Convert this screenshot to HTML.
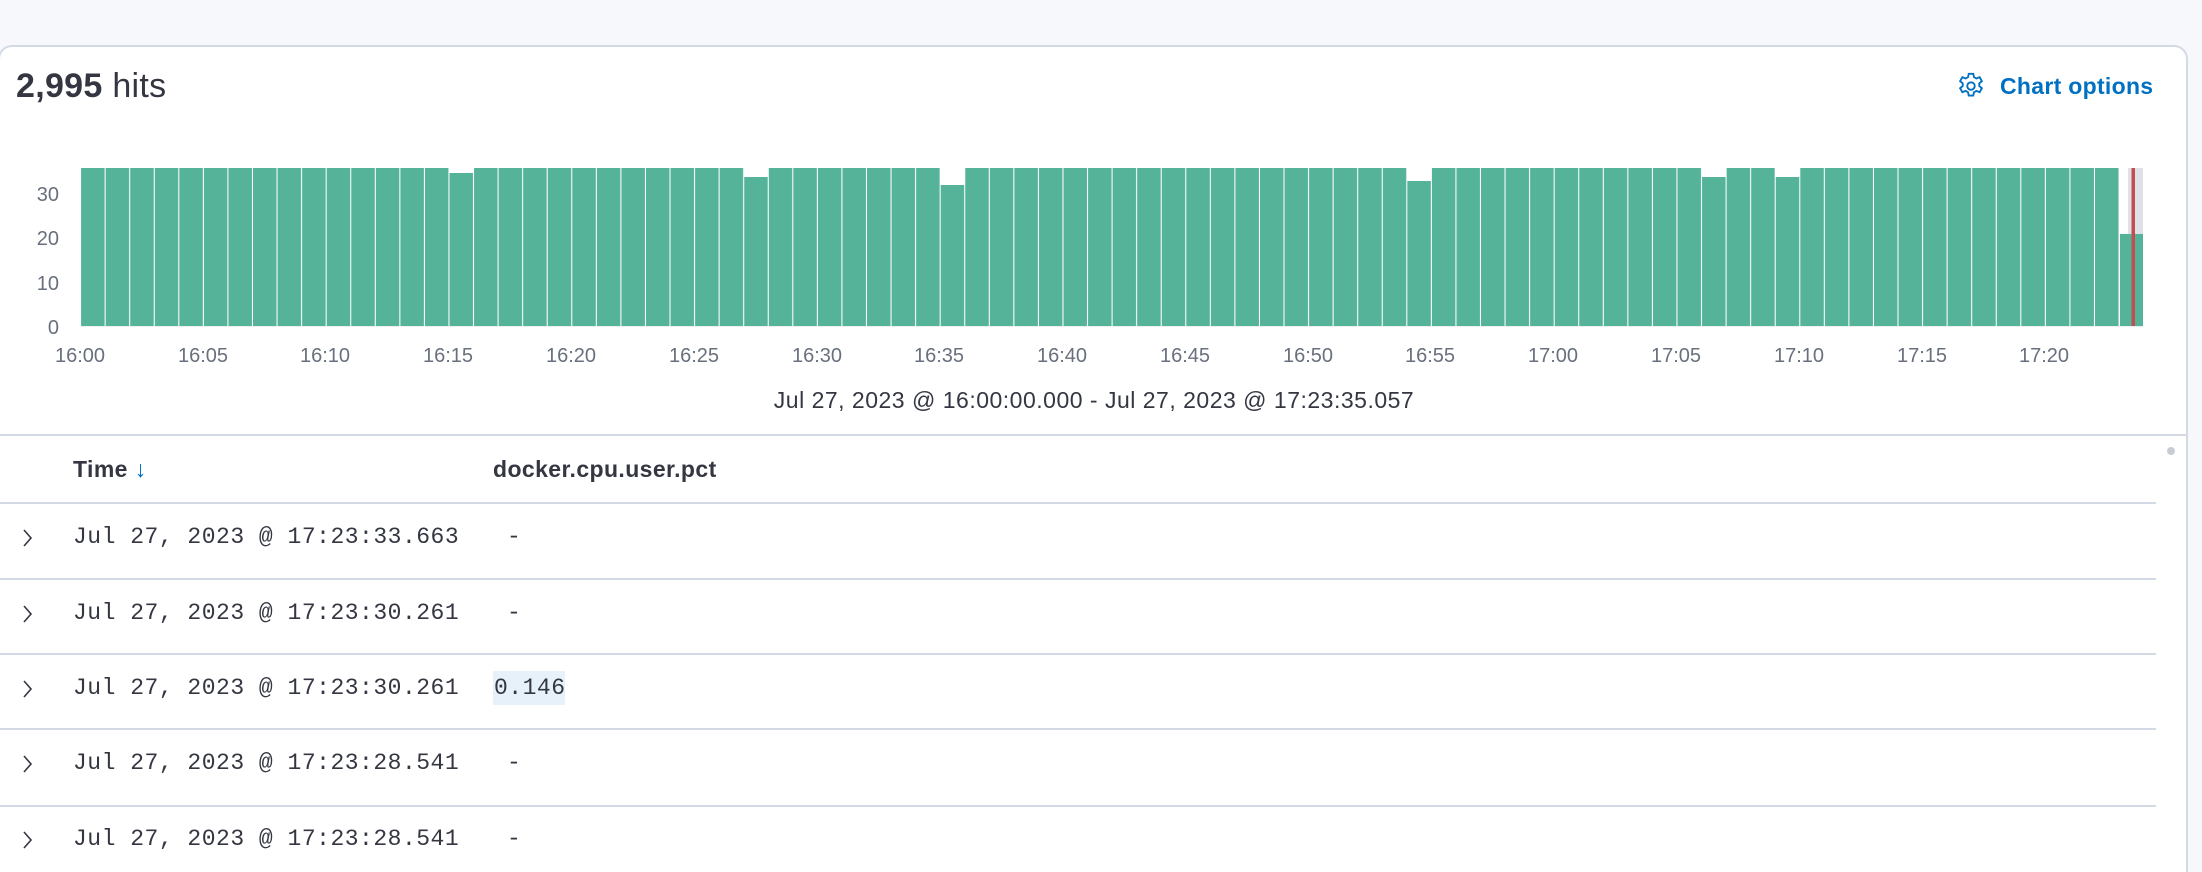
<!DOCTYPE html>
<html><head><meta charset="utf-8"><style>
*{margin:0;padding:0;box-sizing:border-box}
html,body{width:2202px;height:872px;overflow:hidden}
body{background:#f7f8fc;font-family:"Liberation Sans",sans-serif;position:relative;color:#343741}
.card{position:absolute;left:-2px;top:45px;width:2190px;height:827px;background:#fff;border:2px solid #d3dae6;border-bottom:none;border-radius:14px 14px 0 0}
.abs{position:absolute;white-space:nowrap}
.hl{border-top:2px solid #d3dae6;position:absolute;left:0}
.mono{font-family:"Liberation Mono",monospace;font-size:23px;letter-spacing:0.5px;color:#343741}
</style></head><body>
<div class="card"></div>
<div class="abs" style="left:16px;top:66px;font-size:34px;line-height:40px;letter-spacing:0.3px"><b>2,995</b> hits</div>
<svg class="abs" style="left:1956px;top:71px" width="30" height="30" viewBox="0 0 16 16"><path fill="none" stroke="#0071c2" stroke-width="1" d="M6.8 1.5h2.4l.4 1.8 1.3.7 1.7-.7 1.2 2.1-1.4 1.2v1.4l1.4 1.2-1.2 2.1-1.7-.7-1.3.7-.4 1.8H6.8l-.4-1.8-1.3-.7-1.7.7-1.2-2.1 1.4-1.2V6.6L2.2 5.4l1.2-2.1 1.7.7 1.3-.7z"/><circle cx="8" cy="8" r="2" fill="none" stroke="#0071c2" stroke-width="1"/></svg>
<div class="abs" style="left:2000px;top:71px;font-size:23px;line-height:30px;font-weight:bold;color:#0071c2;letter-spacing:0.3px">Chart options</div>
<svg class="abs" style="left:0;top:0" width="2202" height="440">
<defs><pattern id="b" x="80.6" y="0" width="24.56" height="440" patternUnits="userSpaceOnUse"><rect x="0.5" y="0" width="23.5" height="440" fill="#54b399"/></pattern></defs>
<rect x="2128" y="168" width="15" height="158" fill="#e0e1e6"/>
<rect x="80.6" y="168" width="2038.5" height="158" fill="url(#b)"/>
<g fill="#fff">
<rect x="449" y="166" width="24.6" height="7"/>
<rect x="743.7" y="166" width="24.6" height="11"/>
<rect x="940.2" y="166" width="24.6" height="19"/>
<rect x="1406.8" y="166" width="24.6" height="15"/>
<rect x="1701.6" y="166" width="24.6" height="11"/>
<rect x="1775.3" y="166" width="24.6" height="11"/>
</g>
<rect x="2120" y="234" width="23" height="92" fill="#54b399"/>
<rect x="2131.5" y="168" width="3.5" height="158" fill="#c0504d"/>
<line x1="80" y1="326.5" x2="2143" y2="326.5" stroke="#eef0f3" stroke-width="1"/>
<g font-family="Liberation Sans" font-size="20" fill="#69707d" text-anchor="end">
<text x="59" y="201">30</text><text x="59" y="245">20</text><text x="59" y="290">10</text><text x="59" y="334">0</text>
</g>
<g font-family="Liberation Sans" font-size="20" fill="#69707d" text-anchor="middle">
<text x="80" y="362">16:00</text><text x="203" y="362">16:05</text><text x="325" y="362">16:10</text><text x="448" y="362">16:15</text><text x="571" y="362">16:20</text><text x="694" y="362">16:25</text><text x="817" y="362">16:30</text><text x="939" y="362">16:35</text><text x="1062" y="362">16:40</text><text x="1185" y="362">16:45</text><text x="1308" y="362">16:50</text><text x="1430" y="362">16:55</text><text x="1553" y="362">17:00</text><text x="1676" y="362">17:05</text><text x="1799" y="362">17:10</text><text x="1922" y="362">17:15</text><text x="2044" y="362">17:20</text>
</g>
<text x="1094" y="408" font-family="Liberation Sans" font-size="23" letter-spacing="0.5" fill="#343741" text-anchor="middle">Jul 27, 2023 @ 16:00:00.000 - Jul 27, 2023 @ 17:23:35.057</text>
</svg>
<div class="hl" style="top:434px;width:2187px"></div>
<div class="abs" style="left:73px;top:455px;font-size:23px;font-weight:bold;line-height:28px;letter-spacing:0.4px">Time <span style="color:#0071c2;font-weight:normal">&#8595;</span></div>
<div class="abs" style="left:493px;top:455px;font-size:23px;font-weight:bold;line-height:28px;letter-spacing:0.4px">docker.cpu.user.pct</div>
<div class="hl" style="top:502px;width:2156px"></div>
<div class="hl" style="top:578px;width:2156px"></div>
<div class="hl" style="top:653px;width:2156px"></div>
<div class="hl" style="top:728px;width:2156px"></div>
<div class="hl" style="top:805px;width:2156px"></div>
<div class="abs" style="left:2167px;top:447px;width:8px;height:8px;border-radius:4px;background:#c8ccd3"></div>
<div class="abs" style="left:493px;top:671px;width:72px;height:34px;background:#e6f1fa"></div>
<svg class="abs" style="left:0;top:0" width="60" height="872"><g fill="none" stroke="#343741" stroke-width="1.6">
<path d="M24 530l7 8-7 8"/><path d="M24 606l7 8-7 8"/><path d="M24 681l7 8-7 8"/><path d="M24 756l7 8-7 8"/><path d="M24 832l7 8-7 8"/></g></svg>
<div class="abs mono" style="left:73px;top:524px">Jul 27, 2023 @ 17:23:33.663</div><div class="abs mono" style="left:507px;top:524px">-</div>
<div class="abs mono" style="left:73px;top:600px">Jul 27, 2023 @ 17:23:30.261</div><div class="abs mono" style="left:507px;top:600px">-</div>
<div class="abs mono" style="left:73px;top:675px">Jul 27, 2023 @ 17:23:30.261</div><div class="abs mono" style="left:494px;top:675px">0.146</div>
<div class="abs mono" style="left:73px;top:750px">Jul 27, 2023 @ 17:23:28.541</div><div class="abs mono" style="left:507px;top:750px">-</div>
<div class="abs mono" style="left:73px;top:826px">Jul 27, 2023 @ 17:23:28.541</div><div class="abs mono" style="left:507px;top:826px">-</div>
</body></html>
